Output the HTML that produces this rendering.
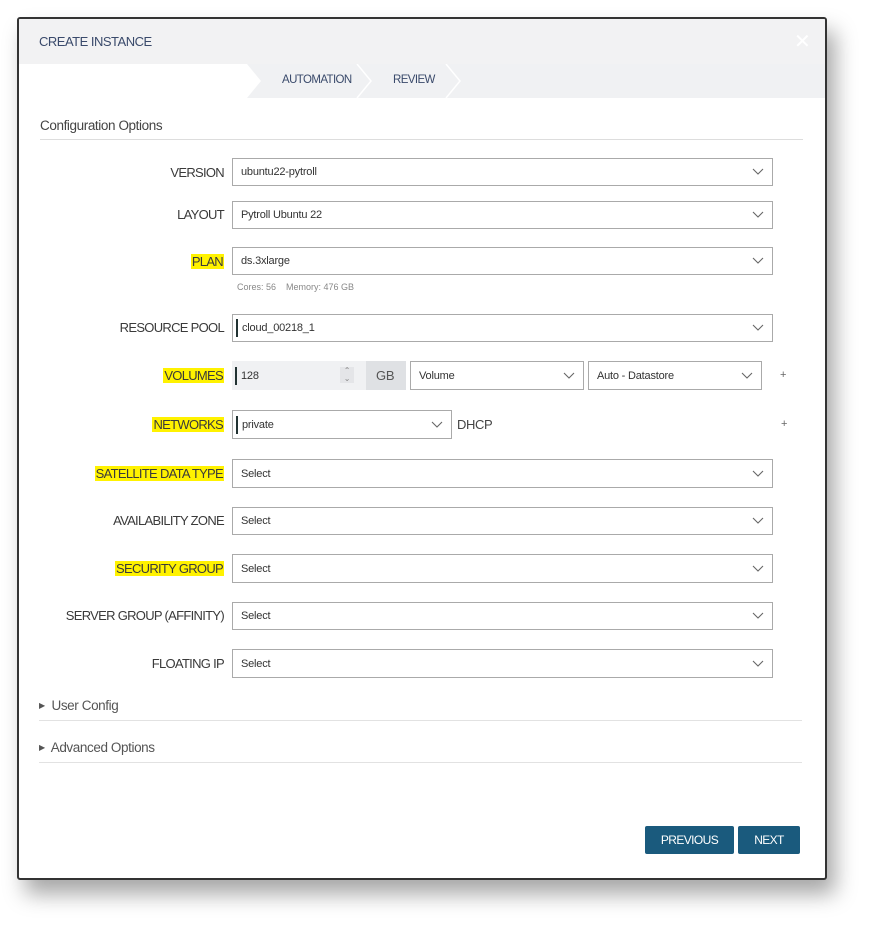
<!DOCTYPE html>
<html><head><style>
body{margin:0;width:874px;height:927px;background:#fff;font-family:"Liberation Sans",sans-serif;position:relative;overflow:hidden}
.a{position:absolute}
.modal{left:17px;top:17px;width:806px;height:859px;border:2px solid #333;border-radius:3px;background:#fff;box-shadow:8px 14px 22px rgba(0,0,0,.35);overflow:hidden}
.lbl{position:absolute;right:650px;font-size:13px;color:#3a3a3a;letter-spacing:-0.7px;text-align:right;white-space:nowrap}
.hl{background:#fff200;padding:0 1px}
.sel{position:absolute;border:1px solid #aaa;background:#fff;font-size:11px;color:#333;box-sizing:border-box;padding-left:8px;display:flex;align-items:center;letter-spacing:-0.2px}
.sel svg{position:absolute;right:8px;top:50%;margin-top:-4px}
.cur{border-left:2px solid #233;padding-left:4px;height:18px;line-height:18px;margin-left:-5px}
</style></head><body>
<div class="a modal">
 <div class="a" style="left:0;top:0;width:806px;height:45px;background:#f2f2f3"></div>
 <div class="a" style="left:20px;top:15px;font-size:13px;color:#3a4a6b;letter-spacing:-0.5px">CREATE INSTANCE</div>
 <div class="a" style="left:775px;top:10px;font-size:20px;color:#fff">✕</div>
 <svg class="a" style="left:0;top:45px" width="806" height="34">
  <rect x="0" y="0" width="806" height="34" fill="#f0f1f3"/>
  <polygon points="0,0 228,0 242,17 228,34 0,34" fill="#fff"/>
  <polyline points="338,0 352,17 338,34" fill="none" stroke="#fff" stroke-width="1.5"/>
  <polyline points="427,0 441,17 427,34" fill="none" stroke="#fff" stroke-width="1.5"/>
 </svg>
 <div class="a" style="left:263px;top:55px;font-size:11.5px;color:#3a4a6b;letter-spacing:-0.6px">AUTOMATION</div>
 <div class="a" style="left:374px;top:55px;font-size:11.5px;color:#3a4a6b;letter-spacing:-0.6px">REVIEW</div>
 <div class="a" style="left:21px;top:99px;font-size:13.5px;color:#444;letter-spacing:-0.4px">Configuration Options</div>
 <div class="a" style="left:21px;top:120px;width:763px;height:1px;background:#ddd"></div>
</div>
<div class="lbl" style="top:165px">VERSION</div>
<div class="sel" style="left:232px;top:158px;width:541px;height:28px">ubuntu22-pytroll<svg width="12" height="7"><polyline points="1,1 6,6 11,1" fill="none" stroke="#666" stroke-width="1.1"/></svg></div>
<div class="lbl" style="top:207px">LAYOUT</div>
<div class="sel" style="left:232px;top:201px;width:541px;height:28px">Pytroll Ubuntu 22<svg width="12" height="7"><polyline points="1,1 6,6 11,1" fill="none" stroke="#666" stroke-width="1.1"/></svg></div>
<div class="lbl" style="top:254px"><span class="hl">PLAN</span></div>
<div class="sel" style="left:232px;top:247px;width:541px;height:28px">ds.3xlarge<svg width="12" height="7"><polyline points="1,1 6,6 11,1" fill="none" stroke="#666" stroke-width="1.1"/></svg></div>
<div class="a" style="left:237px;top:282px;font-size:9px;color:#888">Cores: 56 &nbsp;&nbsp; Memory: 476 GB</div>
<div class="lbl" style="top:320px">RESOURCE POOL</div>
<div class="sel" style="left:232px;top:314px;width:541px;height:28px"><span class="cur">cloud_00218_1</span><svg width="12" height="7"><polyline points="1,1 6,6 11,1" fill="none" stroke="#666" stroke-width="1.1"/></svg></div>
<div class="lbl" style="top:368px"><span class="hl">VOLUMES</span></div>
<div class="sel" style="left:232px;top:361px;width:135px;height:29px;background:#f0f1f3;border:none"><span class="cur">128</span><span class="a" style="left:108px;top:6px;width:14px;height:16px;background:#e4e5e8;font-size:8px;color:#888;text-align:center;line-height:8px">⌃<br>⌄</span></div>
<div class="sel" style="left:366px;top:361px;width:40px;height:29px;background:#dfe1e4;border:none;font-size:13px;color:#555;padding-left:10px">GB</div>
<div class="sel" style="left:410px;top:361px;width:174px;height:29px">Volume<svg width="12" height="7"><polyline points="1,1 6,6 11,1" fill="none" stroke="#666" stroke-width="1.1"/></svg></div>
<div class="sel" style="left:588px;top:361px;width:174px;height:29px">Auto - Datastore<svg width="12" height="7"><polyline points="1,1 6,6 11,1" fill="none" stroke="#666" stroke-width="1.1"/></svg></div>
<div class="a" style="left:780px;top:369px;font-size:11px;color:#666">+</div>
<div class="lbl" style="top:417px"><span class="hl">NETWORKS</span></div>
<div class="sel" style="left:232px;top:410px;width:220px;height:29px"><span class="cur">private</span><svg width="12" height="7"><polyline points="1,1 6,6 11,1" fill="none" stroke="#666" stroke-width="1.1"/></svg></div>
<div class="a" style="left:457px;top:417px;font-size:13px;color:#444;letter-spacing:-0.4px">DHCP</div>
<div class="a" style="left:781px;top:418px;font-size:11px;color:#666">+</div>
<div class="lbl" style="top:466px"><span class="hl">SATELLITE DATA TYPE</span></div>
<div class="sel" style="left:232px;top:459px;width:541px;height:29px">Select<svg width="12" height="7"><polyline points="1,1 6,6 11,1" fill="none" stroke="#666" stroke-width="1.1"/></svg></div>
<div class="lbl" style="top:513px">AVAILABILITY ZONE</div>
<div class="sel" style="left:232px;top:507px;width:541px;height:28px">Select<svg width="12" height="7"><polyline points="1,1 6,6 11,1" fill="none" stroke="#666" stroke-width="1.1"/></svg></div>
<div class="lbl" style="top:561px"><span class="hl">SECURITY GROUP</span></div>
<div class="sel" style="left:232px;top:554px;width:541px;height:29px">Select<svg width="12" height="7"><polyline points="1,1 6,6 11,1" fill="none" stroke="#666" stroke-width="1.1"/></svg></div>
<div class="lbl" style="top:608px">SERVER GROUP (AFFINITY)</div>
<div class="sel" style="left:232px;top:602px;width:541px;height:28px">Select<svg width="12" height="7"><polyline points="1,1 6,6 11,1" fill="none" stroke="#666" stroke-width="1.1"/></svg></div>
<div class="lbl" style="top:656px">FLOATING IP</div>
<div class="sel" style="left:232px;top:649px;width:541px;height:29px">Select<svg width="12" height="7"><polyline points="1,1 6,6 11,1" fill="none" stroke="#666" stroke-width="1.1"/></svg></div>
<div class="a" style="left:39px;top:698px;font-size:13.5px;color:#555;letter-spacing:-0.4px"><span style="font-size:8px;vertical-align:2px">▶</span>&nbsp; User Config</div>
<div class="a" style="left:39px;top:720px;width:763px;height:1px;background:#e2e2e2"></div>
<div class="a" style="left:39px;top:740px;font-size:13.5px;color:#555;letter-spacing:-0.4px"><span style="font-size:8px;vertical-align:2px">▶</span>&nbsp; Advanced Options</div>
<div class="a" style="left:39px;top:762px;width:763px;height:1px;background:#e2e2e2"></div>
<div class="a" style="left:645px;top:826px;width:89px;height:28px;background:#1a5a7d;border-radius:2px;color:#fff;font-size:12px;text-align:center;line-height:28px;letter-spacing:-0.6px">PREVIOUS</div>
<div class="a" style="left:738px;top:826px;width:62px;height:28px;background:#1a5a7d;border-radius:2px;color:#fff;font-size:12px;text-align:center;line-height:28px;letter-spacing:-0.6px">NEXT</div>
</body></html>
